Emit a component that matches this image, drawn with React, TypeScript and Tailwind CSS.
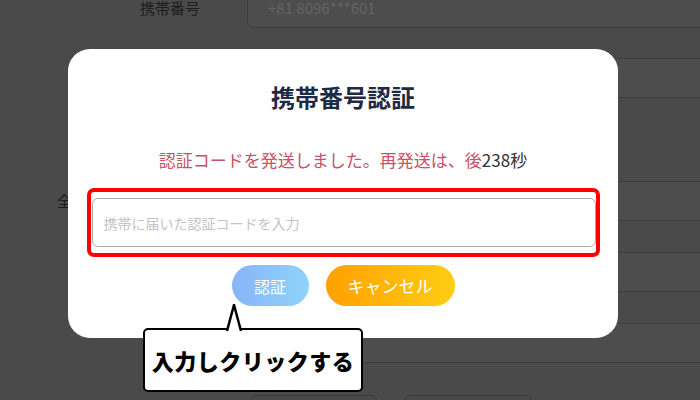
import React from "react";

const jp = "font-['Noto_Sans_CJK_JP',sans-serif]";

// dimmed form rows behind the dialog
const rows = [
  { gap: "-mt-3", label: "携帯番号", pad: "pl-[140px]", value: "+81 8096***601" },
  { gap: "mt-[30px]", label: "", pad: "pl-[140px]", value: "" },
  { gap: "mt-[83px]", label: "全角カナ氏名", pad: "pl-[57px]", value: "" },
  { gap: "mt-[31px]", label: "", pad: "pl-[140px]", value: "" },
  { gap: "mt-[31px]", label: "", pad: "pl-[140px]", value: "" },
];

const App = () => {
  return (
    <div className={`relative w-[700px] h-[400px] overflow-hidden bg-[#4a4a4a] ${jp}`}>
      {/* Background form */}
      <div className="flex flex-col">
        {rows.map((row, i) => (
          <div key={i} className={`flex items-center h-10 ${row.gap}`}>
            <span className={`w-[247px] shrink-0 ${row.pad} text-[15px] text-[#1c1c1c] whitespace-nowrap`}>
              {row.label}
            </span>
            <div className="w-[520px] shrink-0 h-10 rounded-md bg-[#4d4d4d] border border-[#3d3d3d] flex items-center pl-5 text-[15px] text-[#636363]">
              {row.value}
            </div>
          </div>
        ))}
        <div className="flex mt-[32px] ml-[250px] gap-[28px]">
          <div className="w-[127px] h-10 shrink-0 rounded-md border border-[#3a3a3a]" />
          <div className="w-[127px] h-10 shrink-0 rounded-md border border-[#3a3a3a]" />
        </div>
      </div>

      {/* Dialog */}
      <div className="absolute left-[68px] top-[49px] w-[550px] h-[289px] rounded-[22px] bg-white flex flex-col items-center">
        <h2 className="mt-[34px] text-[24px] leading-[28px] font-bold text-[#1f2a44]">携帯番号認証</h2>
        <p className="mt-[37px] text-[17px] leading-[24px] text-[#c9506b]">
          認証コードを発送しました。再発送は、後<span className="text-[#333333]">238秒</span>
        </p>
        <div className="mt-[16px] w-[513px] border-4 border-[#ff0000] rounded-[7px] pl-[1px] pr-0 py-[6px]">
          <input
            className="w-full h-[49px] rounded-[6px] border border-[#a9a9a9] pl-[11px] text-[14px] text-[#333] placeholder:text-[#c4c4c4] outline-none"
            placeholder="携帯に届いた認証コードを入力"
          />
        </div>
        <div className="mt-2 flex gap-[17px]">
          <button className="w-[77px] h-[41px] rounded-full bg-gradient-to-r from-[#88b4f8] to-[#8fd3fa] text-white text-[16px]">
            認証
          </button>
          <button className="w-[129px] h-[41px] rounded-full bg-gradient-to-r from-[#ffa000] to-[#ffcd12] text-white text-[17px]">
            キャンセル
          </button>
        </div>
      </div>

      {/* Callout */}
      <div className="absolute left-[143px] top-[328px] w-[220px] h-[64px] bg-white border-[2.5px] border-black rounded-[5px] flex items-center justify-center">
        <span className="text-[22px] font-black text-black tracking-[0.5px]">入力しクリックする</span>
      </div>
      <svg className="absolute left-[225px] top-[304px]" width="20" height="28" viewBox="0 0 20 28">
        <polyline points="2,27 9,1 16,27" fill="white" stroke="black" strokeWidth="2.5" strokeLinejoin="miter" />
      </svg>
    </div>
  );
};

export default App;
